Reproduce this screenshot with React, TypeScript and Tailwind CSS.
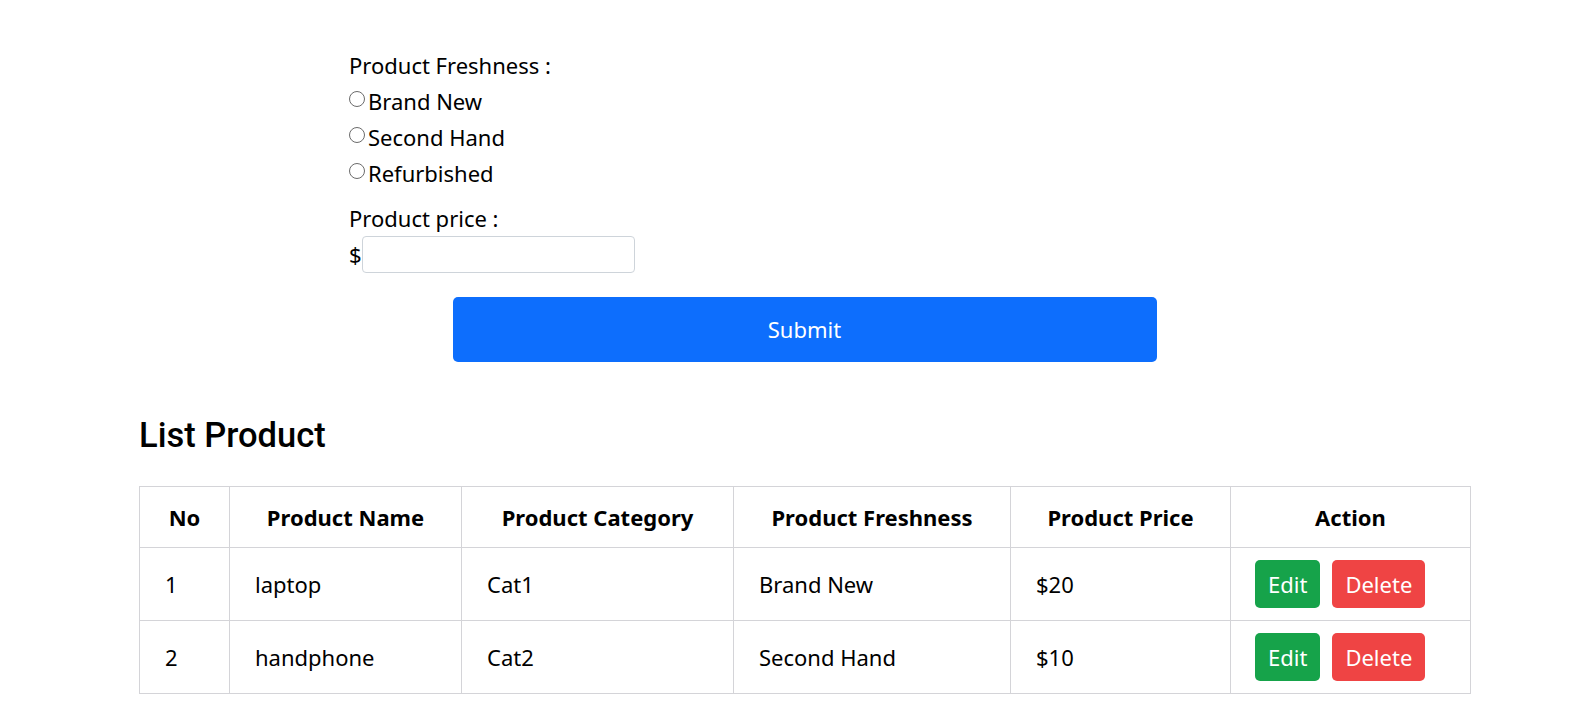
import { useState } from 'react'

interface Product {
  id: number
  name: string
  category: string
  freshness: string
  price: number
}

const products: Product[] = [
  { id: 1, name: 'laptop', category: 'Cat1', freshness: 'Brand New', price: 20 },
  { id: 2, name: 'handphone', category: 'Cat2', freshness: 'Second Hand', price: 10 },
]

const freshnessOptions = ['Brand New', 'Second Hand', 'Refurbished']

export default function App() {
  const [freshness, setFreshness] = useState('')
  const [price, setPrice] = useState('')

  return (
    <div className="min-h-screen bg-white text-black text-[22px] font-['Noto_Sans',sans-serif] pl-[139px] pt-[47px]">
      <form className="w-[1331px]" onSubmit={(e) => e.preventDefault()}>
        <div className="pl-[210px]">
          <div className="leading-[36px]">Product Freshness :</div>
          {freshnessOptions.map((opt) => (
            <label key={opt} className="flex items-center h-[36px] leading-[36px]">
              <input
                type="radio"
                name="freshness"
                value={opt}
                checked={freshness === opt}
                onChange={() => setFreshness(opt)}
                className="appearance-none m-0 w-[16px] h-[16px] rounded-full border border-[#6b6b6b] bg-white checked:border-[5px] checked:border-[#0d6efd] mb-[4px]"
              />
              <span className="ml-[3px]">{opt}</span>
            </label>
          ))}
          <div className="leading-[36px] mt-[9px]">Product price :</div>
          <div className="flex items-center">
            <span>$</span>
            <input
              type="text"
              value={price}
              onChange={(e) => setPrice(e.target.value)}
              className="w-[273px] h-[37px] border border-[#ced4da] rounded-[4px] px-3 outline-none"
            />
          </div>
        </div>
        <div className="flex justify-center mt-[24px]">
          <button type="submit" className="w-[704px] h-[65px] bg-[#0d6efd] text-white rounded-[5px]">
            Submit
          </button>
        </div>
      </form>

      <h2 className="font-['Roboto',sans-serif] font-medium text-[34.5px] leading-[42px] mt-[52px]">List Product</h2>

      <table className="w-[1331px] table-fixed border-collapse mt-[30px]">
        <thead>
          <tr className="h-[61px]">
            <th className="w-[90px] border border-[#d4d4d8] font-bold">No</th>
            <th className="w-[232px] border border-[#d4d4d8] font-bold">Product Name</th>
            <th className="w-[272px] border border-[#d4d4d8] font-bold">Product Category</th>
            <th className="w-[277px] border border-[#d4d4d8] font-bold">Product Freshness</th>
            <th className="w-[220px] border border-[#d4d4d8] font-bold">Product Price</th>
            <th className="w-[240px] border border-[#d4d4d8] font-bold">Action</th>
          </tr>
        </thead>
        <tbody>
          {products.map((p) => (
            <tr key={p.id} className="h-[73px]">
              <td className="border border-[#d4d4d8] pl-[25px]">{p.id}</td>
              <td className="border border-[#d4d4d8] pl-[25px]">{p.name}</td>
              <td className="border border-[#d4d4d8] pl-[25px]">{p.category}</td>
              <td className="border border-[#d4d4d8] pl-[25px]">{p.freshness}</td>
              <td className="border border-[#d4d4d8] pl-[25px]">${p.price}</td>
              <td className="border border-[#d4d4d8] pl-[24px]">
                <div className="flex gap-[12px]">
                  <button className="h-[48px] px-[13px] bg-[#16a34a] text-white rounded-[5px]">Edit</button>
                  <button className="h-[48px] px-[13px] bg-[#ef4444] text-white rounded-[5px]">Delete</button>
                </div>
              </td>
            </tr>
          ))}
        </tbody>
      </table>
    </div>
  )
}
